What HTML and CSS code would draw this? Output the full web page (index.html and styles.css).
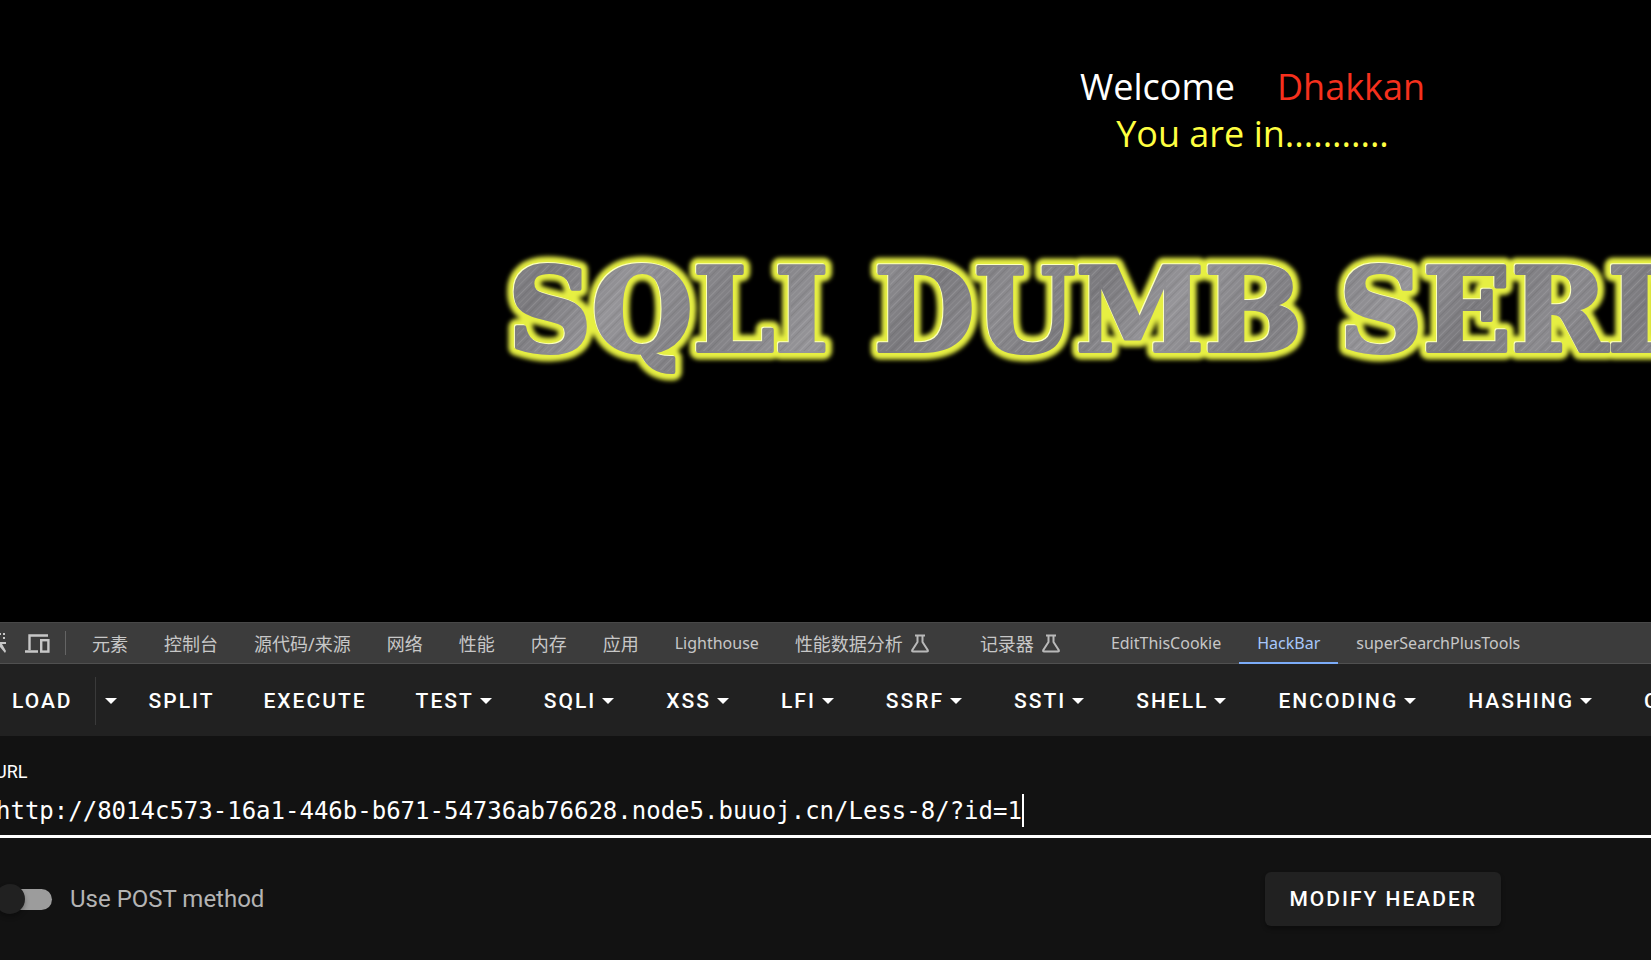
FILE: index.html
```html
<!DOCTYPE html>
<html lang="zh-CN">
<head>
<meta charset="utf-8">
<title>SQLI DUMB SERIES</title>
<link rel="stylesheet" href="styles.css">
</head>
<body>
<main class="page">
  <div class="greeting">
    <div>Welcome<span class="name">Dhakkan</span></div>
    <div class="status">You are in...........</div>
  </div>
  <svg class="banner" viewBox="0 0 1530 150" width="1530" height="150" role="img" aria-label="SQLI DUMB SERIES">
    <defs>
      <linearGradient id="metal" gradientUnits="userSpaceOnUse" x1="0" y1="0" x2="190" y2="130" spreadMethod="reflect">
        <stop offset="0" stop-color="#8c8b8f"/>
        <stop offset="0.3" stop-color="#7b7a7e"/>
        <stop offset="0.6" stop-color="#969599"/>
        <stop offset="1" stop-color="#807f83"/>
      </linearGradient>
      <pattern id="brush" width="17" height="17" patternUnits="userSpaceOnUse" patternTransform="rotate(45)">
        <rect x="1" width="1" height="17" fill="#fff" opacity=".1"/>
        <rect x="4" width="2" height="17" fill="#333" opacity=".09"/>
        <rect x="8" width="1" height="17" fill="#fff" opacity=".13"/>
        <rect x="11" width="1" height="17" fill="#333" opacity=".12"/>
        <rect x="14" width="1" height="17" fill="#fff" opacity=".08"/>
      </pattern>
      <filter id="soft" x="-5%" y="-20%" width="110%" height="140%"><feGaussianBlur stdDeviation="2"/></filter>
    </defs>
    <g class="banner-text banner-glow" aria-hidden="true" filter="url(#soft)">
      <text x="18" y="111">SQLI</text><text x="384" y="111">DUMB</text><text x="849" y="111">SERIES</text>
    </g>
    <g class="banner-text banner-edge" aria-hidden="true">
      <text x="17" y="110">SQLI</text><text x="383" y="110">DUMB</text><text x="848" y="110">SERIES</text>
    </g>
    <g class="banner-text banner-face">
      <text x="18" y="111">SQLI</text><text x="384" y="111">DUMB</text><text x="849" y="111">SERIES</text>
    </g>
    <g class="banner-text banner-brush" aria-hidden="true">
      <text x="18" y="111">SQLI</text><text x="384" y="111">DUMB</text><text x="849" y="111">SERIES</text>
    </g>
  </svg>
</main>

<section class="devtools">
  <nav class="tabs">
    <button class="tool" aria-label="Inspect">
      <svg width="6" height="27" viewBox="0 0 6 27" fill="#c7c7c7"><path d="M0 3h1v2H0zM3 3h2v2H3zM3 7h2v2H3zM0 12h6v2H2l4 7-1 2-5-6z"/></svg>
    </button>
    <button class="tool" aria-label="Device toolbar">
      <svg width="25" height="19" viewBox="0 0 25 19" fill="none" stroke="#c7c7c7" stroke-width="2"><path d="M23 1.5H4.5V16M0 17.5h13" stroke-width="2.4"/><rect x="16.2" y="6.2" width="7.2" height="11.4" stroke-width="2.4"/></svg>
    </button>
    <span class="rule"></span>
    <button class="tab">元素</button>
    <button class="tab">控制台</button>
    <button class="tab">源代码/来源</button>
    <button class="tab">网络</button>
    <button class="tab">性能</button>
    <button class="tab">内存</button>
    <button class="tab">应用</button>
    <button class="tab tab-latin">Lighthouse</button>
    <button class="tab tab-lab">性能数据分析<svg width="18" height="19" viewBox="0 0 18 19" fill="none" stroke="#b9b9b9" stroke-width="2"><path d="M4 1.500h10M6.500 1.500V8L1.200 16.200q-.4 1.300.8 1.300h14q1.200 0 .8-1.300L11.500 8V1.500"/></svg></button>
    <button class="tab tab-lab">记录器<svg width="18" height="19" viewBox="0 0 18 19" fill="none" stroke="#b9b9b9" stroke-width="2"><path d="M4 1.500h10M6.500 1.500V8L1.200 16.200q-.4 1.300.8 1.300h14q1.200 0 .8-1.300L11.500 8V1.500"/></svg></button>
    <button class="tab tab-latin">EditThisCookie</button>
    <button class="tab tab-latin tab-active">HackBar</button>
    <button class="tab tab-latin">superSearchPlusTools</button>
  </nav>

  <div class="toolbar">
    <button class="action action-load">LOAD</button>
    <button class="action action-drop" aria-label="Load options"><svg class="caret" viewBox="0 0 27 27"><path d="M8 11h12l-6 6z"/></svg></button>
    <button class="action">SPLIT</button>
    <button class="action">EXECUTE</button>
    <button class="action">TEST<svg class="caret" viewBox="0 0 27 27"><path d="M8 11h12l-6 6z"/></svg></button>
    <button class="action">SQLI<svg class="caret" viewBox="0 0 27 27"><path d="M8 11h12l-6 6z"/></svg></button>
    <button class="action">XSS<svg class="caret" viewBox="0 0 27 27"><path d="M8 11h12l-6 6z"/></svg></button>
    <button class="action">LFI<svg class="caret" viewBox="0 0 27 27"><path d="M8 11h12l-6 6z"/></svg></button>
    <button class="action">SSRF<svg class="caret" viewBox="0 0 27 27"><path d="M8 11h12l-6 6z"/></svg></button>
    <button class="action">SSTI<svg class="caret" viewBox="0 0 27 27"><path d="M8 11h12l-6 6z"/></svg></button>
    <button class="action">SHELL<svg class="caret" viewBox="0 0 27 27"><path d="M8 11h12l-6 6z"/></svg></button>
    <button class="action">ENCODING<svg class="caret" viewBox="0 0 27 27"><path d="M8 11h12l-6 6z"/></svg></button>
    <button class="action">HASHING<svg class="caret" viewBox="0 0 27 27"><path d="M8 11h12l-6 6z"/></svg></button>
    <button class="action">C</button>
  </div>

  <div class="panel">
    <label class="url-label" for="url">URL</label>
    <div class="url-field">
      <input class="url-input" id="url" type="text" spellcheck="false" value="http://8014c573-16a1-446b-b671-54736ab76628.node5.buuoj.cn/Less-8/?id=1">
      <span class="cursor"></span>
    </div>
    <div class="options">
      <label class="post"><input class="switch" type="checkbox">Use POST method</label>
      <button class="modify">MODIFY HEADER</button>
    </div>
  </div>
</section>
</body>
</html>
```

FILE: styles.css
```css
* { box-sizing: border-box; }
body {
  margin: 0;
  min-height: 100vh;
  display: flex;
  flex-direction: column;
  overflow: hidden;
  background: #000;
  font-family: Roboto, "Noto Sans CJK SC", sans-serif;
}
button {
  border: 0;
  padding: 0;
  background: none;
  color: inherit;
  font: inherit;
  letter-spacing: inherit;
  white-space: nowrap;
}
svg { flex: none; }

.page {
  flex: 1;
  padding-top: 63px;
  overflow: hidden;
}
.greeting {
  padding-left: 854px;
  text-align: center;
  color: #fff;
  font-family: "Open Sans", "Noto Sans", sans-serif;
  font-size: 36px;
  line-height: 47px;
}
.name { margin-left: 42px; color: #f6301d; }
.status { color: #ffff40; }
.banner { display: block; margin: 83px 0 0 490px; }
.banner-text {
  font-family: "DejaVu Serif", serif;
  font-size: 116px;
  font-weight: 700;
  stroke-linejoin: round;
}
.banner-glow { fill: #e6ef42; stroke: #e6ef42; stroke-width: 17px; }
.banner-edge { fill: #fff; stroke: #fbffc0; stroke-width: 4px; }
.banner-face { fill: url(#metal); stroke: url(#metal); stroke-width: 4px; }
.banner-brush { fill: url(#brush); }

.devtools { background: #121212; color: #fff; }
.tabs {
  display: flex;
  align-items: center;
  height: 42px;
  background: #3c3c3c;
  border-top: 1px solid #484848;
  border-bottom: 1px solid #505050;
  color: #c7c7c7;
  font-family: "Noto Sans", "Noto Sans CJK SC", sans-serif;
}
.tool { display: flex; }
.tool + .tool { margin-left: 19px; }
.rule { width: 1px; height: 24px; margin: 0 8px 0 15px; background: #646464; }
.tab {
  display: flex;
  flex: none;
  align-items: center;
  height: 42px;
  padding: 0 18px;
  font-size: 18px;
}
.tab-latin { font-size: 16px; }
.tab-lab { gap: 8px; padding-right: 33px; }
.tab-active { color: #a8c7fa; border-bottom: 2px solid #7cacf8; border-top: 2px solid transparent; }

.toolbar {
  display: flex;
  align-items: center;
  gap: 1px;
  height: 72px;
  padding-top: 1px;
  background: #212121;
  font-size: 21px;
  font-weight: 500;
  letter-spacing: 2px;
}
.action {
  display: flex;
  flex: none;
  align-items: center;
  height: 48px;
  padding: 0 24px;
}
.action-load { padding: 0 22px 0 12px; border-right: 1px solid #3a3a3a; }
.action-drop { padding: 0; }
.action-drop .caret { margin: 0; }
.caret { width: 27px; height: 27px; margin: 0 -4px 0 -2px; fill: #fff; }

.panel { padding-top: 24px; }
.url-label {
  display: block;
  margin-left: -5px;
  font-size: 18px;
  line-height: 24px;
}
.url-field {
  display: flex;
  align-items: center;
  height: 54px;
  padding-top: 2px;
  border-bottom: 3px solid #fff;
}
.url-input {
  width: 71ch;
  margin-left: -4px;
  padding: 0;
  border: 0;
  outline: 0;
  background: none;
  color: #fff;
  font: 24px "DejaVu Sans Mono", monospace;
}
.cursor { width: 2px; height: 33px; background: #fff; }
.options {
  display: flex;
  align-items: center;
  justify-content: space-between;
  padding: 34px 150px 34px 0;
}
.post {
  display: flex;
  align-items: center;
  gap: 18px;
  color: #b4b4b4;
  font-size: 24px;
}
.switch {
  appearance: none;
  display: flex;
  align-items: center;
  width: 54px;
  height: 21px;
  margin: 0 0 0 -2px;
  border-radius: 11px;
  background: #9c9c9c;
}
.switch::before {
  content: "";
  width: 30px;
  height: 30px;
  margin-left: -3px;
  flex: none;
  border-radius: 50%;
  background: #212121;
  box-shadow: 0 3px 5px rgba(0, 0, 0, .3);
}
.modify {
  height: 54px;
  padding: 0 24px;
  border-radius: 6px;
  background: #212121;
  box-shadow: 0 3px 4px rgba(0, 0, 0, .3);
  font-size: 21px;
  font-weight: 500;
  letter-spacing: 2px;
}
```
